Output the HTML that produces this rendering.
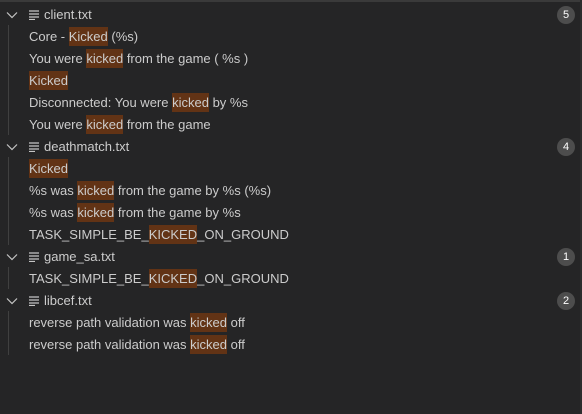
<!DOCTYPE html>
<html><head><style>
body{margin:0;width:582px;height:414px;background:#252526;overflow:hidden;font-family:"Liberation Sans",sans-serif;font-size:13px;color:#cccccc;position:relative}
.top{position:absolute;left:0;top:0;width:582px;height:2px;background:#3a3a3a}
.rb{position:absolute;right:0;top:0;width:2px;height:414px;background:#2d2d2d}
.row{position:absolute;left:0;height:22px;line-height:22px;width:580px;white-space:pre}
.m{padding-left:29px}
.f{padding-left:44px}
.chev{position:absolute;left:6px;top:6px}
.ic{position:absolute;left:29px;top:6px}
.h{background:#623315;padding:2px 0}
.badge{position:absolute;left:557px;top:2px;width:18px;height:18px;border-radius:9px;background:#4d4d4d;color:#fff;font-size:11px;line-height:18px;text-align:center}
.guide{position:absolute;left:8px;width:1px;background:#404040}
</style></head><body>
<div class="top"></div><div class="rb"></div>
<div class="guide" style="top:25px;height:110px"></div>
<div class="guide" style="top:157px;height:88px"></div>
<div class="guide" style="top:267px;height:22px"></div>
<div class="guide" style="top:311px;height:44px"></div>
<script>
const data=[
['f','client.txt',5],['m','Core - <span class="h">Kicked</span> (%s)'],['m','You were <span class="h">kicked</span> from the game ( %s )'],['m','<span class="h">Kicked</span>'],['m','Disconnected: You were <span class="h">kicked</span> by %s'],['m','You were <span class="h">kicked</span> from the game'],
['f','deathmatch.txt',4],['m','<span class="h">Kicked</span>'],['m','%s was <span class="h">kicked</span> from the game by %s (%s)'],['m','%s was <span class="h">kicked</span> from the game by %s'],['m','TASK_SIMPLE_BE_<span class="h">KICKED</span>_ON_GROUND'],
['f','game_sa.txt',1],['m','TASK_SIMPLE_BE_<span class="h">KICKED</span>_ON_GROUND'],
['f','libcef.txt',2],['m','reverse path validation was <span class="h">kicked</span> off'],['m','reverse path validation was <span class="h">kicked</span> off']];
let y=4,h='';
for(const d of data){
 if(d[0]=='f'){
  h+=`<div class="row f" style="top:${y}px"><svg class="chev" width="12" height="10" viewBox="0 0 12 10"><path d="M1 2.5L6 7.5L11 2.5" fill="none" stroke="#c5c5c5" stroke-width="1.2"/></svg><svg class="ic" width="11" height="10" viewBox="0 0 11 10"><path d="M0 1h10M0 4h10M0 7h10M0 9.5h6" stroke="#c5c5c5" stroke-width="1.3"/></svg>${d[1]}<span class="badge">${d[2]}</span></div>`;
 } else h+=`<div class="row m" style="top:${y}px">${d[1]}</div>`;
 y+=22;
}
document.write(h);
</script>
</body></html>
